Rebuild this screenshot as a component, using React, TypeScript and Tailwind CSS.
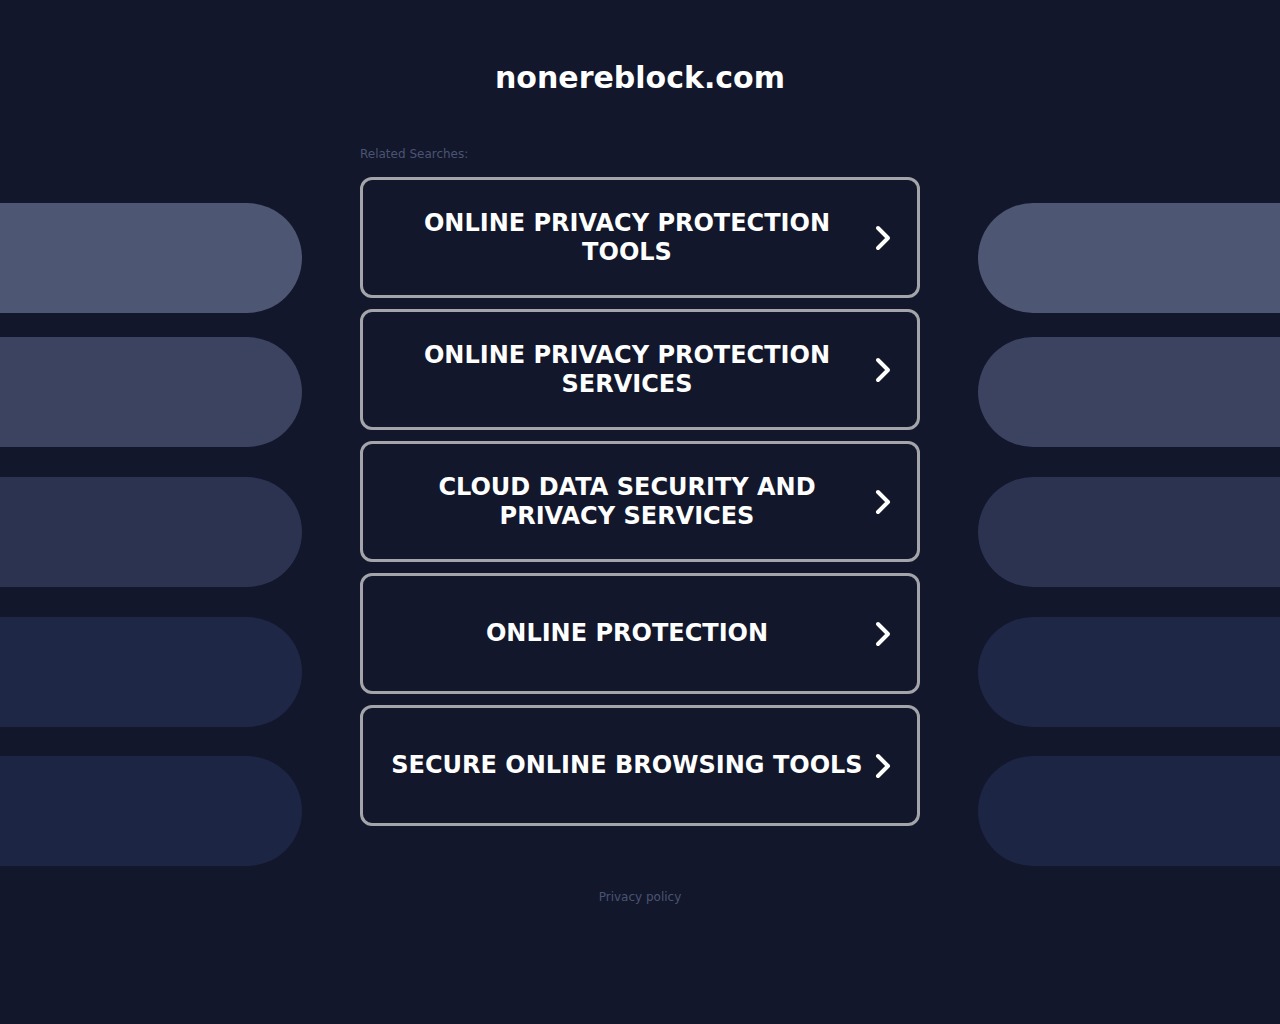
const links = [
  "Online Privacy Protection Tools",
  "Online Privacy Protection Services",
  "Cloud Data Security and Privacy Services",
  "Online Protection",
  "Secure Online Browsing Tools",
]

const pills = [
  { top: "mt-[203px]", color: "bg-[#4d5673]" },
  { top: "mt-[24px]", color: "bg-[#3b4360]" },
  { top: "mt-[30px]", color: "bg-[#2b3350]" },
  { top: "mt-[30px]", color: "bg-[#1e2746]" },
  { top: "mt-[29px]", color: "bg-[#1c2543]" },
]

function Chevron() {
  return (
    <svg width="20" height="28" viewBox="0 0 20 28" className="shrink-0">
      <path d="M5 4 L15 14 L5 24" fill="none" stroke="#ffffff" strokeWidth="4" strokeLinecap="round" strokeLinejoin="round" />
    </svg>
  )
}

export default function App() {
  return (
    <div className="min-h-[1024px] w-full bg-[#12172b] flex justify-between font-['DejaVu_Sans',sans-serif] overflow-hidden">
      {/* left decoration */}
      <div className="w-[302px] flex flex-col">
        {pills.map((p, i) => (
          <div key={i} className={`${p.top} ${p.color} h-[110px] rounded-r-[55px]`} />
        ))}
      </div>

      {/* content */}
      <div className="w-[560px] flex flex-col">
        <h1 className="mt-[59px] text-center text-white font-bold text-[30px] leading-[38px]">nonereblock.com</h1>
        <div className="mt-[49px] text-[12px] leading-[16px] text-[#4a5472]">Related Searches:</div>
        <div className="mt-[15px] flex flex-col gap-[11px]">
          {links.map((label) => (
            <a
              key={label}
              href="#"
              className="h-[121px] border-[3px] border-[#a3a5aa] rounded-[12px] flex items-center pl-[26px] pr-[24px] gap-[8px]"
            >
              <span className="flex-1 text-center text-white font-bold uppercase text-[24px] leading-[29px]">
                {label}
              </span>
              <Chevron />
            </a>
          ))}
        </div>
        <div className="mt-[63px] text-center text-[12px] leading-[16px] text-[#4a5472]">Privacy policy</div>
      </div>

      {/* right decoration */}
      <div className="w-[302px] flex flex-col">
        {pills.map((p, i) => (
          <div key={i} className={`${p.top} ${p.color} h-[110px] rounded-l-[55px]`} />
        ))}
      </div>
    </div>
  )
}
